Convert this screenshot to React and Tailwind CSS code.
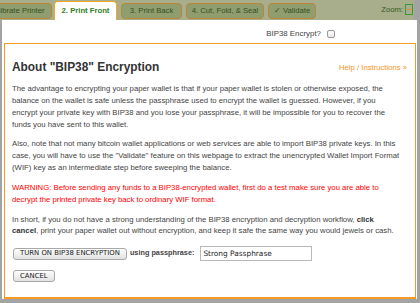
import React from "react";

function Tab({ children, active, className = "" }) {
  if (active) {
    return (
      <div
        className={`h-[19px] flex items-center justify-center bg-white border border-b-0 border-[#f5a623] rounded-t-[4px] text-[7.7px] font-bold text-[#2f7d1f] whitespace-nowrap pb-[1px] ${className}`}
      >
        {children}
      </div>
    );
  }
  return (
    <div
      className={`h-[16px] mb-[1px] flex items-center justify-center bg-[#909d6e] border border-[#b9873a] rounded-[4px] text-[7.7px] text-[#34501f] whitespace-nowrap ${className}`}
    >
      {children}
    </div>
  );
}

export default function App() {
  return (
    <div className="w-[420px] h-[303px] overflow-hidden bg-[#a3a3a3] font-['Liberation_Sans',Arial,sans-serif]">
      <div className="w-[417px] h-[303px] flex flex-col">
        {/* tab bar */}
        <div className="w-[414px] h-[20px] shrink-0 bg-[#a8ae8b] flex items-end overflow-hidden">
          <div className="flex items-end shrink-0">
            <Tab className="w-[79px] ml-[-27px] shrink-0">1. Calibrate Printer</Tab>
            <Tab active className="w-[63px] ml-[2px] shrink-0">2. Print Front</Tab>
            <Tab className="w-[61px] ml-[4px] shrink-0">3. Print Back</Tab>
            <Tab className="w-[78px] ml-[4px] shrink-0">4. Cut, Fold, &amp; Seal</Tab>
            <Tab className="w-[48px] ml-[4px] shrink-0">✓ Validate</Tab>
          </div>
          <div className="ml-auto self-center flex items-center mr-[1px]">
            <span className="text-[7.7px] text-[#2f5a1f]">Zoom:</span>
            <div className="ml-[2px] w-[8px] h-[11px] border border-[#3a9a3a] bg-[#a8ae8b] flex items-center justify-center">
              <div className="w-[4px] h-[1px] bg-[#f08a1c]" />
            </div>
          </div>
        </div>

        {/* white content */}
        <div className="ml-[2px] flex-1 mb-[4px] bg-white flex flex-col">
          <div className="h-[23px] shrink-0 pt-[5px] flex items-center justify-end pr-[82px]">
            <span className="text-[7.9px] text-[#444]">BIP38 Encrypt?</span>
            <div className="ml-[6px] w-[8px] h-[8px] rounded-[2px] border border-[#9a9a9a] bg-gradient-to-b from-white to-[#e8e8e8]" />
          </div>

          <div className="flex-1 ml-[2px] mr-[1px] border border-b-2 border-[#f59a23] pl-[7px] pr-[8px] pt-[16px] text-[#444]">
            <div className="flex items-center justify-between">
              <h2 className="text-[11.9px] leading-[15px] font-bold text-[#333]">
                About "BIP38" Encryption
              </h2>
              <a className="text-[7.7px] leading-[15px] text-[#f7941d]">
                Help / Instructions »
              </a>
            </div>

            <div className="mt-[8px] text-[7.75px] leading-[11.9px]">
              <p className="mb-[7.8px]">
                The advantage to encrypting your paper wallet is that if your paper wallet is stolen or otherwise exposed, the
                <br />
                balance on the wallet is safe unless the passphrase used to encrypt the wallet is guessed. However, if you
                <br />
                encrypt your private key with BIP38 and you lose your passphrase, it will be impossible for you to recover the
                <br />
                funds you have sent to this wallet.
              </p>
              <p className="mb-[7.8px]">
                Also, note that not many bitcoin wallet applications or web services are able to import BIP38 private keys. In this
                <br />
                case, you will have to use the "Validate" feature on this webpage to extract the unencrypted Wallet Import Format
                <br />
                (WIF) key as an intermediate step before sweeping the balance.
              </p>
              <p className="mb-[7.8px] text-[#ff0000]">
                WARNING: Before sending any funds to a BIP38-encrypted wallet, first do a test make sure you are able to
                <br />
                decrypt the printed private key back to ordinary WIF format.
              </p>
              <p className="mb-[9px]">
                In short, if you do not have a strong understanding of the BIP38 encryption and decryption workflow, <b className="text-[#333]">click</b>
                <br />
                <b className="text-[#333]">cancel</b>, print your paper wallet out without encryption, and keep it safe the same way you would jewels or cash.
              </p>
            </div>

            <div className="flex items-center h-[15px]">
              <button className="ml-[1px] h-[12px] px-[6px] rounded-[3px] border border-[#a8a8a8] bg-gradient-to-b from-[#fdfdfd] to-[#e2e2e2] text-[6.9px] leading-none text-[#222] font-['DejaVu_Sans',sans-serif] whitespace-nowrap">
                TURN ON BIP38 ENCRYPTION
              </button>
              <span className="ml-[3px] text-[7.3px] font-bold text-[#444] whitespace-nowrap">
                using passphrase:
              </span>
              <div className="ml-[6px] w-[112px] h-[15px] border border-[#b8b8b8] flex items-center pl-[2px] text-[7.4px] text-[#222] font-['DejaVu_Sans',sans-serif] whitespace-nowrap">
                Strong Passphrase
              </div>
            </div>

            <div className="mt-[9px] flex">
              <button className="ml-[1px] h-[12px] px-[6px] rounded-[3px] border border-[#a8a8a8] bg-gradient-to-b from-[#fdfdfd] to-[#e2e2e2] text-[6.9px] leading-none text-[#222] font-['DejaVu_Sans',sans-serif]">
                CANCEL
              </button>
            </div>
          </div>
        </div>
      </div>
    </div>
  );
}
